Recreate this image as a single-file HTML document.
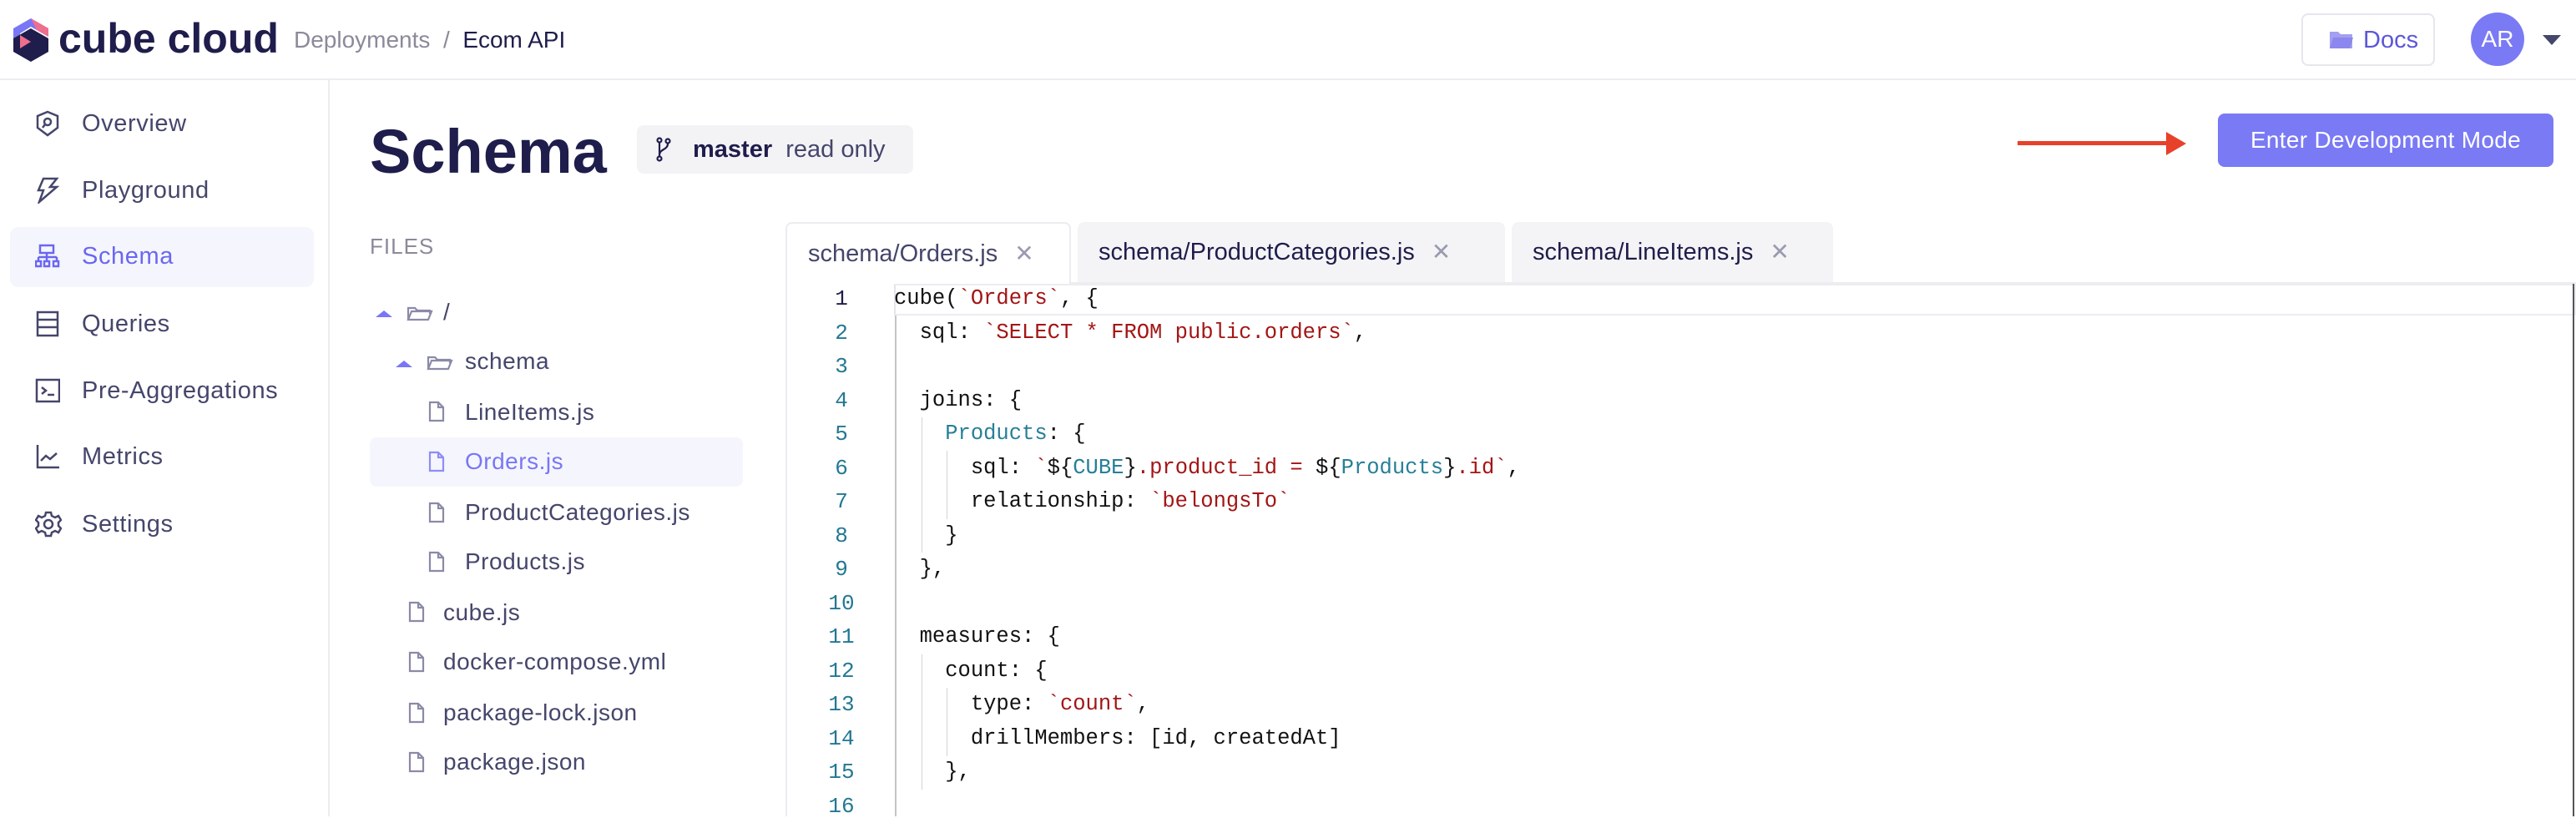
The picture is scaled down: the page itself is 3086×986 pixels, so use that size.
<!DOCTYPE html>
<html><head><meta charset="utf-8"><style>
*{margin:0;padding:0;box-sizing:border-box}
body{width:3086px;height:978px;overflow:hidden;background:#fff;font-family:"Liberation Sans",sans-serif;color:#45466b;position:relative}
.a{position:absolute;white-space:nowrap}
.nav{position:absolute;left:0;width:390px;height:72px;line-height:72px;font-size:29px;letter-spacing:.6px;color:#45466b;white-space:nowrap}
.nav svg{position:absolute;left:42px;top:20px}
.nav span{position:absolute;left:98px}
.tr{position:absolute;height:60px;line-height:60px;font-size:28px;letter-spacing:.5px;color:#45466b;white-space:nowrap}
.code{position:absolute;left:1071px;font-family:"Liberation Mono",monospace;font-size:25.5px;color:#111;white-space:pre;line-height:40.5px}
.ln{position:absolute;left:986px;width:44px;text-align:center;font-family:"Liberation Mono",monospace;font-size:26px;color:#237893;line-height:40.5px}
.s{color:#a31515}.t{color:#267f99}
.tab{position:absolute;top:266px;height:72px;line-height:72px;font-size:29px;color:#1f1d4b;background:#f4f4f7;border-radius:8px 8px 0 0;padding-left:25px;white-space:nowrap}
.x{color:#9a9ab0;margin-left:20px;font-size:28px}
</style></head><body>
<svg class="a" style="left:14px;top:20px" width="46" height="56" viewBox="0 0 46 56">
<polygon points="23,2 44,14 44,24 23,12 10,20 10,30 2,26 2,14" fill="#7a77f5"/>
<polygon points="23,2 44,14 44,24 30,16" fill="#ef6d8f"/>
<polygon points="2,26 23,14 44,26 44,42 23,54 2,42" fill="#1f1d4b"/>
<polygon points="10,22 23,30 10,38" fill="#ef6d8f"/>
</svg>
<div class="a" style="left:70px;top:14px;font-size:50px;font-weight:bold;color:#1f1d4b;letter-spacing:0px;line-height:64px">cube cloud</div>
<div class="a" style="left:352px;top:28px;font-size:28px;line-height:40px;color:#8a8a9a">Deployments&nbsp;&nbsp;/&nbsp;&nbsp;<span style="color:#1f1d4b">Ecom API</span></div>
<div class="a" style="left:2757px;top:16px;width:160px;height:63px;border:2px solid #e6e6ee;border-radius:8px"></div>
<svg class="a" style="left:2790px;top:36px" width="30" height="24" viewBox="0 0 30 24"><path d="M1 2h10l3 3h14v17H1z" fill="#a3a0ef"/><path d="M5 9h24l-4 13H1z" fill="#8b87ee"/></svg>
<div class="a" style="left:2831px;top:26px;font-size:29px;line-height:44px;color:#5b57d9">Docs</div>
<div class="a" style="left:2960px;top:15px;width:64px;height:64px;border-radius:50%;background:#7a7af5;color:#fff;font-size:28px;line-height:64px;text-align:center">AR</div>
<div class="a" style="left:3046px;top:42px;width:0;height:0;border-left:11px solid transparent;border-right:11px solid transparent;border-top:12px solid #45466b"></div>
<div class="a" style="left:0;top:94px;width:3086px;height:2px;background:#ececf1"></div>
<div class="a" style="left:393px;top:96px;width:2px;height:882px;background:#ececf1"></div>
<div class="a" style="left:12px;top:272px;width:364px;height:72px;background:#f5f6fd;border-radius:10px"></div>
<div class="nav" style="top:112px"><svg width="30" height="32" viewBox="0 0 30 32" fill="none" stroke="#45466b" stroke-width="2.5"><path d="M15 2L27 7v14l-12 9L3 21V7z"/><circle cx="15" cy="14" r="4"/><path d="M12 17l-3 4"/></svg><span>Overview</span></div>
<div class="nav" style="top:192px"><svg width="30" height="32" viewBox="0 0 30 32" fill="none" stroke="#45466b" stroke-width="2.5"><path d="M10 2h16l-8 10h8L5 30l5-14H4z"/></svg><span>Playground</span></div>
<div class="nav" style="top:271px;color:#6b67f0"><svg width="30" height="32" viewBox="0 0 30 32" fill="none" stroke="#6b67f0" stroke-width="2.5"><rect x="6" y="3" width="16" height="9"/><path d="M14 12v5M4 17h22M4 17v5M14 17v5M26 17v5"/><rect x="1" y="22" width="6" height="6"/><rect x="11" y="22" width="6" height="6"/><rect x="22" y="22" width="6" height="6"/></svg><span>Schema</span></div>
<div class="nav" style="top:352px"><svg width="30" height="32" viewBox="0 0 30 32" fill="none" stroke="#45466b" stroke-width="2.5"><rect x="3" y="2" width="24" height="28"/><path d="M3 11h24M3 20h24"/></svg><span>Queries</span></div>
<div class="nav" style="top:432px"><svg width="30" height="32" viewBox="0 0 30 32" fill="none" stroke="#45466b" stroke-width="2.5"><rect x="2" y="3" width="27" height="26"/><path d="M8 12l5 4-5 4M15 21h8"/></svg><span>Pre-Aggregations</span></div>
<div class="nav" style="top:511px"><svg width="30" height="32" viewBox="0 0 30 32" fill="none" stroke="#45466b" stroke-width="2.5"><path d="M3 2v27h26M7 21l6-6 5 4 8-7"/></svg><span>Metrics</span></div>
<div class="nav" style="top:592px"><svg width="32" height="32" viewBox="0 0 32 32" fill="none" stroke="#45466b" stroke-width="2.5"><circle cx="16" cy="16" r="5"/><path d="M13 2h6l1 4 4 2 4-2 3 5-3 3v4l3 3-3 5-4-2-4 2-1 4h-6l-1-4-4-2-4 2-3-5 3-3v-4l-3-3 3-5 4 2 4-2z"/></svg><span>Settings</span></div>
<div class="a" style="left:443px;top:136px;font-size:74px;font-weight:bold;color:#1f1d4b;line-height:92px">Schema</div>
<div class="a" style="left:763px;top:150px;width:331px;height:58px;background:#f3f3f6;border-radius:8px"></div>
<svg class="a" style="left:786px;top:164px" width="18" height="30" viewBox="0 0 18 30" fill="none" stroke="#1f1d4b" stroke-width="2.2"><circle cx="4" cy="4" r="2.5"/><circle cx="4" cy="26" r="2.5"/><circle cx="14" cy="5" r="2.5"/><path d="M4 7v16M14 8c0 8-10 6-10 14"/></svg>
<div class="a" style="left:830px;top:158px;font-size:29px;line-height:42px;color:#1f1d4b"><b>master</b>&nbsp; <span style="color:#45466b">read only</span></div>
<div class="a" style="left:2417px;top:169px;width:180px;height:5px;background:#e8412a"></div>
<div class="a" style="left:2595px;top:158px;width:0;height:0;border-top:14px solid transparent;border-bottom:14px solid transparent;border-left:24px solid #e8412a"></div>
<div class="a" style="left:2657px;top:136px;width:402px;height:64px;background:#7a7af5;border-radius:8px;color:#fff;font-size:28px;line-height:64px;text-align:center;letter-spacing:.3px">Enter Development Mode</div>
<div class="a" style="left:443px;top:280px;font-size:26px;color:#8a8a9a;letter-spacing:1px">FILES</div>
<div class="a" style="left:443px;top:524px;width:447px;height:59px;background:#f5f6fd;border-radius:8px"></div>
<svg class="a" style="left:0;top:0" width="900" height="978" fill="none" stroke="#8a8aa8" stroke-width="2.2">
<path d="M450 380l10-8 10 8z" fill="#7a77f5" stroke="none"/>
<path d="M474 440l10-8 10 8z" fill="#7a77f5" stroke="none"/>
<path d="M489 383v-14h8l3 3h15v4M489 383l4-10h24l-4 10z"/>
<path d="M513 442v-14h8l3 3h15v4M513 442l4-10h24l-4 10z"/>
<path d="M515 482h10l6 6v16h-16z M525 482v6h6"/>
<path d="M515 542h10l6 6v16h-16z M525 542v6h6" stroke="#8f8cf5"/>
<path d="M515 603h10l6 6v16h-16z M525 603v6h6"/>
<path d="M515 662h10l6 6v16h-16z M525 662v6h6"/>
<path d="M491 722h10l6 6v16h-16z M501 722v6h6"/>
<path d="M491 782h10l6 6v16h-16z M501 782v6h6"/>
<path d="M491 843h10l6 6v16h-16z M501 843v6h6"/>
<path d="M491 902h10l6 6v16h-16z M501 902v6h6"/>
</svg>
<div class="tr" style="left:531px;top:344px">/</div>
<div class="tr" style="left:557px;top:403px">schema</div>
<div class="tr" style="left:557px;top:464px">LineItems.js</div>
<div class="tr" style="left:557px;top:523px;color:#7a77f5">Orders.js</div>
<div class="tr" style="left:557px;top:584px">ProductCategories.js</div>
<div class="tr" style="left:557px;top:643px">Products.js</div>
<div class="tr" style="left:531px;top:704px">cube.js</div>
<div class="tr" style="left:531px;top:763px">docker-compose.yml</div>
<div class="tr" style="left:531px;top:824px">package-lock.json</div>
<div class="tr" style="left:531px;top:883px">package.json</div>
<div class="tab" style="left:941px;width:342px;background:#fff;border:2px solid #ececf1;border-bottom:none;z-index:2;height:74px;color:#45466b">schema/Orders.js<span class="x">✕</span></div>
<div class="tab" style="left:1291px;width:512px">schema/ProductCategories.js<span class="x">✕</span></div>
<div class="tab" style="left:1811px;width:385px">schema/LineItems.js<span class="x">✕</span></div>
<div class="a" style="left:941px;top:338px;width:2145px;height:2px;background:#ececf1"></div>
<div class="a" style="left:941px;top:338px;width:2px;height:640px;background:#ececf1"></div>
<div class="a" style="left:1071px;top:340px;width:2015px;height:38px;border:2px solid #ececf1;border-left:2px solid #e4e4ea"></div>
<div class="a" style="left:3082px;top:340px;width:2px;height:638px;background:#555"></div>
<div class="a" style="left:1072px;top:378px;width:2px;height:600px;background:#c4c4c4"></div>
<div class="a" style="left:1104px;top:500px;width:1px;height:162px;background:#d4d4d4"></div>
<div class="a" style="left:1104px;top:784px;width:1px;height:162px;background:#d4d4d4"></div>
<div class="a" style="left:1134px;top:540px;width:1px;height:82px;background:#d4d4d4"></div>
<div class="a" style="left:1134px;top:824px;width:1px;height:82px;background:#d4d4d4"></div>
<div class="ln" style="top:338px"><span style="color:#1f1d4b">1</span><br>2<br>3<br>4<br>5<br>6<br>7<br>8<br>9<br>10<br>11<br>12<br>13<br>14<br>15<br>16</div>
<div class="code" style="top:338px">cube(<span class="s">`Orders`</span>, {
  sql: <span class="s">`SELECT * FROM public.orders`</span>,

  joins: {
    <span class="t">Products</span>: {
      sql: <span class="s">`</span>${<span class="t">CUBE</span>}<span class="s">.product_id = </span>${<span class="t">Products</span>}<span class="s">.id`</span>,
      relationship: <span class="s">`belongsTo`</span>
    }
  },

  measures: {
    count: {
      type: <span class="s">`count`</span>,
      drillMembers: [id, createdAt]
    },
</div>
</body></html>
